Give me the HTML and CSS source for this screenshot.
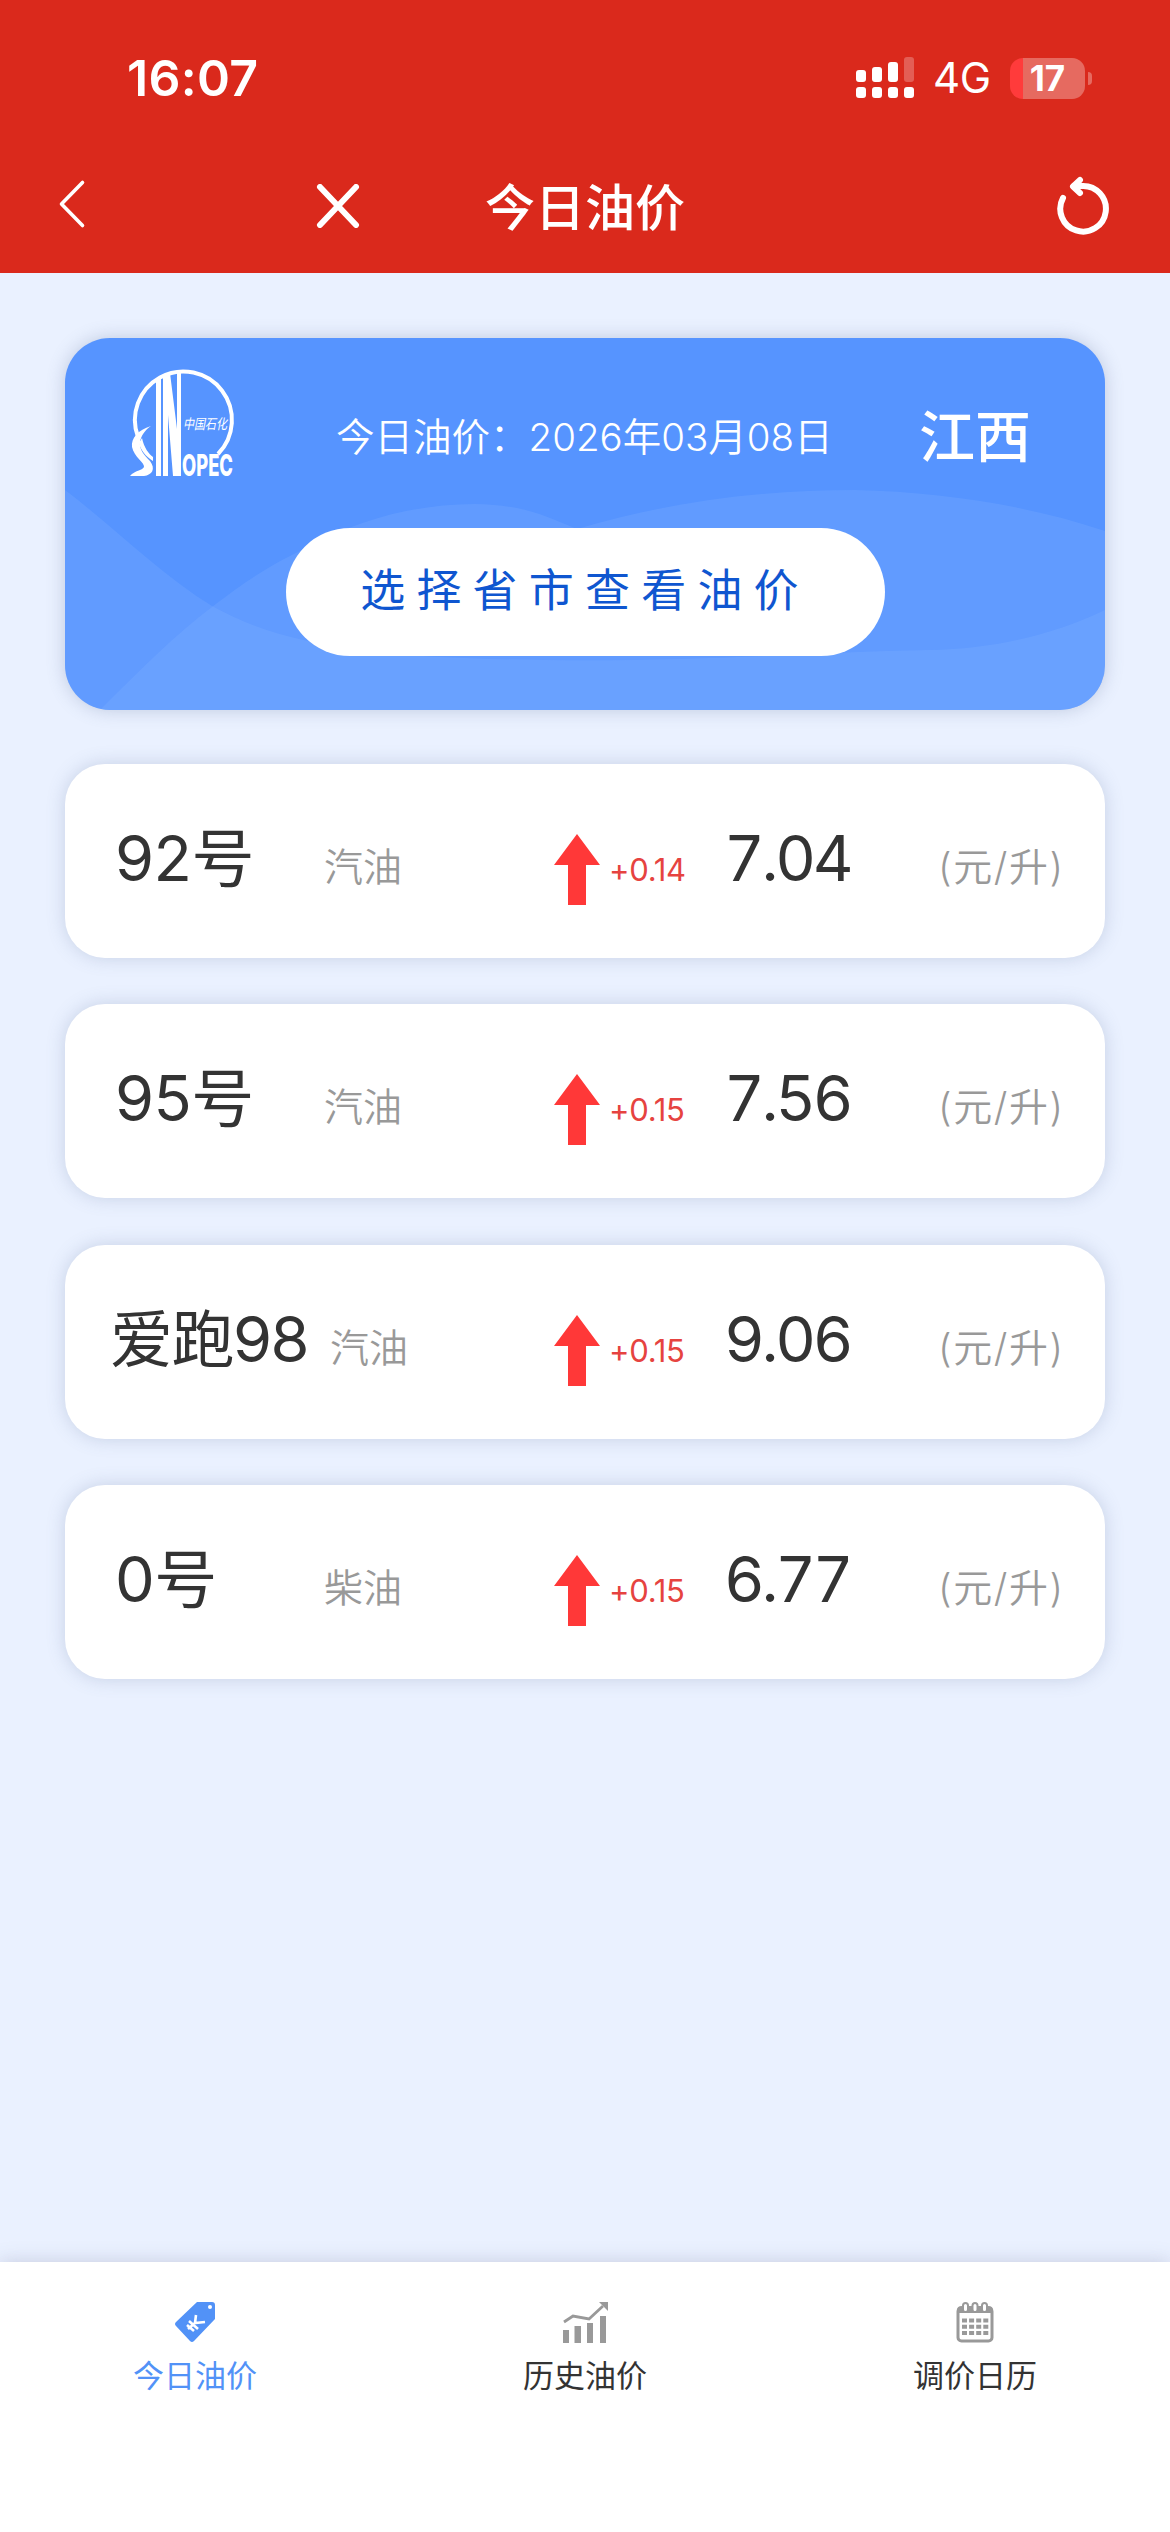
FILE: index.html
```html
<!DOCTYPE html>
<html lang="zh-CN">
<head>
    <meta charset="UTF-8">
    <meta name="viewport" content="width=device-width, initial-scale=1.0">
    <title>今日油价</title>
    <link rel="stylesheet" href="styles.css">
</head>
<body>
    <div class="header">
        <div class="status-bar">
            <div class="time">16:07</div>
            <svg class="signal" width="59" height="42" viewBox="0 0 59 42" fill="#fff">
                <rect x="0" y="13" width="10" height="12" rx="3"/>
                <rect x="16" y="10" width="10" height="15" rx="3"/>
                <rect x="32" y="5" width="10" height="20" rx="3"/>
                <rect x="48" y="0" width="10" height="25" rx="3" opacity="0.25"/>
                <rect x="0" y="30" width="10" height="11" rx="3"/>
                <rect x="16" y="30" width="10" height="11" rx="3"/>
                <rect x="32" y="30" width="10" height="11" rx="3"/>
                <rect x="48" y="30" width="10" height="11" rx="3"/>
            </svg>
            <div class="network">4G</div>
            <div class="battery"><span>17</span></div>
            <div class="battery-tip"></div>
        </div>
        <div class="nav-bar">
            <svg class="nav-back" width="30" height="50" viewBox="0 0 30 50" fill="none" stroke="#fff" stroke-width="3.6" stroke-linecap="round" stroke-linejoin="round">
                <path d="M25.5 3.500L4.500 25L25.5 46.500"/>
            </svg>
            <svg class="nav-close" width="44" height="44" viewBox="0 0 44 44" fill="none" stroke="#fff" stroke-width="6" stroke-linecap="round">
                <path d="M4 3L40 41M40 3L4 41"/>
            </svg>
            <div class="nav-title">今日油价</div>
            <svg class="nav-refresh" width="54" height="60" viewBox="0 0 54 60" fill="none" stroke="#fff" stroke-width="6" stroke-linecap="round" stroke-linejoin="round">
                <path d="M8 22A22.8 22.8 0 1 0 27 10H19"/>
                <path d="M25 4L18 10.500L25 17"/>
            </svg>
        </div>
    </div>

    <div class="content">
        <div class="banner">
            <svg class="banner-bg" width="1040" height="372" viewBox="0 0 1040 372" fill="#8ab4ff">
                <path fill-opacity="0.22" d="M0 152C50 190 95 236 147 268C225 312 330 320 480 322C640 324 740 314 865 312C930 311 990 296 1040 272V372H0Z"/>
                <path fill-opacity="0.22" d="M35 372C75 332 110 297 147 269C180 244 200 230 235 213C290 182 350 166 410 166C460 167 480 178 512 191C600 165 690 152 790 152C880 154 965 168 1040 193V372Z"/>
            </svg>
            <div class="banner-top">
                <svg class="logo" width="106" height="116" viewBox="0 0 106 116">
                    <path d="M8 68A48.500 48.500 0 1 1 88 85" fill="none" stroke="#fff" stroke-width="4"/>
                    <path d="M26 10L31 8V107H26ZM33 7L40 4L47 60V4L51 4V107H43L38 46V107H33Z" fill="#fff"/>
                    <path d="M21 57C8 61 1 69 2 78C4 88 15 94 14 98C12 102 5 101 0 107H14C22 106 26 100 20 92C14 86 9 80 10 73C11 67 15 61 21 57Z" fill="#fff"/>
                    <path d="M12 69C14 79 19 85 23 88V92C16 88 10 80 9 74Z" fill="#fff"/>
                    <text class="logo-name" x="52" y="106.500" textLength="51" lengthAdjust="spacingAndGlyphs">OPEC</text>
                    <text class="logo-cn" x="53" y="60" textLength="44" lengthAdjust="spacingAndGlyphs">中国石化</text>
                </svg>
                <div class="banner-date">今日油价：2026年03月08日</div>
                <div class="banner-city">江西</div>
            </div>
            <button class="select-btn">选择省市查看油价</button>
        </div>

        <div class="price-card">
            <div class="oil-name">92号</div>
            <div class="oil-type">汽油</div>
            <svg class="arrow" width="46" height="72" viewBox="0 0 46 72"><path d="M23 0L46 31H32V71H14V31H0Z" fill="#ff3838"/></svg>
            <div class="change">+0.14</div>
            <div class="price">7.04</div>
            <div class="unit">(元/升)</div>
        </div>
        <div class="price-card">
            <div class="oil-name">95号</div>
            <div class="oil-type">汽油</div>
            <svg class="arrow" width="46" height="72" viewBox="0 0 46 72"><path d="M23 0L46 31H32V71H14V31H0Z" fill="#ff3838"/></svg>
            <div class="change">+0.15</div>
            <div class="price">7.56</div>
            <div class="unit">(元/升)</div>
        </div>
        <div class="price-card long-name">
            <div class="oil-name">爱跑98</div>
            <div class="oil-type">汽油</div>
            <svg class="arrow" width="46" height="72" viewBox="0 0 46 72"><path d="M23 0L46 31H32V71H14V31H0Z" fill="#ff3838"/></svg>
            <div class="change">+0.15</div>
            <div class="price">9.06</div>
            <div class="unit">(元/升)</div>
        </div>
        <div class="price-card">
            <div class="oil-name">0号</div>
            <div class="oil-type">柴油</div>
            <svg class="arrow" width="46" height="72" viewBox="0 0 46 72"><path d="M23 0L46 31H32V71H14V31H0Z" fill="#ff3838"/></svg>
            <div class="change">+0.15</div>
            <div class="price">6.77</div>
            <div class="unit">(元/升)</div>
        </div>
    </div>

    <div class="tab-bar">
        <div class="tab active">
            <svg width="46" height="42" viewBox="0 0 46 42">
                <path d="M25 1H40Q43 1 43 4V18L22 40Q20 42 18 40L4 25Q2 23 4 21Z" fill="#5292f7"/>
                <circle cx="38" cy="6" r="2" fill="#fff"/>
                <path d="M24 14L23 22L33 21M23 22L16 28M17 20L26 28M15 24L22 30" stroke="#fff" stroke-width="2.600" fill="none"/>
            </svg>
            <div>今日油价</div>
        </div>
        <div class="tab">
            <svg width="46" height="42" viewBox="0 0 46 42">
                <path d="M1 29H7V42H1ZM12.500 25H19V42H12.500ZM25 22H31V42H25ZM38 15H44V42H38Z" fill="#999"/>
                <path d="M2 21L11 15L27 18L41 5" stroke="#999" stroke-width="2.800" fill="none"/>
                <path d="M37 1H46V10Z" fill="#999"/>
            </svg>
            <div>历史油价</div>
        </div>
        <div class="tab">
            <svg width="46" height="42" viewBox="0 0 46 42">
                <rect x="6" y="7" width="34" height="33" rx="3.500" fill="none" stroke="#999" stroke-width="3"/>
                <path d="M5 12V9Q5 5 10 5H36Q41 5 41 9V12Z" fill="#999"/>
                <g fill="#fff" stroke="#999" stroke-width="2">
                    <rect x="11" y="2" width="5" height="9" rx="2.500"/>
                    <rect x="20.500" y="2" width="5" height="9" rx="2.500"/>
                    <rect x="30" y="2" width="5" height="9" rx="2.500"/>
                </g>
                <path d="M10 19.500H37M10 25.800H37M10 32H37" stroke="#999" stroke-width="4" stroke-dasharray="5 2.100"/>
            </svg>
            <div>调价日历</div>
        </div>
    </div>
</body>
</html>
```
FILE: styles.css
```css
* {
    box-sizing: border-box;
}

body {
    margin: 0;
    width: 1170px;
    height: 2532px;
    display: flex;
    flex-direction: column;
    overflow: hidden;
    background: #eaf1ff;
    font-family: Inter, "Noto Sans CJK SC", sans-serif;
}

.header {
    height: 273px;
    background: #da291c;
    color: #fff;
}

.status-bar {
    display: flex;
    align-items: center;
    height: 156px;
    padding-left: 127px;
}

.time {
    width: 729px;
    font-size: 50px;
    font-weight: 600;
    line-height: 60px;
    letter-spacing: 0.3px;
}

.network {
    width: 77px;
    margin-left: 18px;
    font-size: 42px;
    line-height: 50px;
    letter-spacing: -0.5px;
}

.battery {
    width: 75px;
    height: 41px;
    border-radius: 13px;
    background: linear-gradient(to right, #ff3b3b 13px, #e66a60 13px);
    font-size: 35px;
    font-weight: 700;
    line-height: 41px;
    text-align: center;
}

.battery-tip {
    width: 4px;
    height: 13px;
    margin-left: 3px;
    border-radius: 0 6px 6px 0;
    background: #e66a60;
}

.nav-bar {
    display: flex;
    align-items: center;
    height: 100px;
    padding-left: 57px;
}

.nav-back {
    margin-right: 229px;
    margin-top: -4px;
}

.nav-title {
    width: 452px;
    margin-left: 125px;
    padding-top: 3px;
    font-size: 50px;
    font-weight: 500;
    line-height: 60px;
}

.nav-refresh {
    margin-left: 118px;
}

.content {
    flex: 1;
    padding: 65px 65px 0;
}

/* 顶部蓝色卡片 */
.banner {
    position: relative;
    height: 372px;
    margin-bottom: 54px;
    border-radius: 45px;
    background: #5694ff;
    box-shadow: 0 0 18px rgba(90, 110, 150, 0.3);
    color: #fff;
    overflow: hidden;
}

.banner-bg {
    position: absolute;
    left: 0;
    top: 0;
}

.banner-top {
    position: relative;
    display: flex;
    align-items: center;
    height: 190px;
    padding: 8px 0 0 65px;
}

.logo {
    margin-top: -20px;
    overflow: visible;
}

.logo-name {
    font-size: 30px;
    font-weight: 800;
    fill: #fff;
}

.logo-cn {
    font-size: 14px;
    font-style: italic;
    fill: #fff;
}

.banner-date {
    width: 583px;
    margin-left: 100px;
    font-size: 38.5px;
    font-weight: 350;
    line-height: 56px;
    white-space: nowrap;
}

.banner-city {
    font-size: 56px;
    font-weight: 500;
    line-height: 60px;
}

.select-btn {
    position: relative;
    display: block;
    width: 599px;
    height: 128px;
    margin: 0 auto;
    padding: 0 0 10px 0;
    border: none;
    border-radius: 64px;
    background: #fff;
    color: #0f56d0;
    font-family: inherit;
    font-size: 45px;
    letter-spacing: 11.2px;
}

.price-card {
    display: grid;
    grid-template-columns: 209px 230px 55px 115px 214px auto;
    align-items: baseline;
    height: 194px;
    margin-bottom: 46.4px;
    padding: 49px 0 0 50px;
    border-radius: 40px;
    background: #fff;
    box-shadow: 0 0 18px rgba(90, 110, 150, 0.25);
    white-space: nowrap;
}

.oil-name,
.price {
    font-size: 63px;
    font-weight: 380;
    line-height: 90px;
    letter-spacing: -0.5px;
    color: #333;
}

.price {
    font-variant-numeric: tabular-nums;
    letter-spacing: -3.3px;
}

.oil-type,
.unit {
    font-size: 39px;
    font-weight: 350;
    color: #999;
}

.unit {
    letter-spacing: 1.6px;
}

.arrow {
    align-self: start;
    margin-top: 21px;
}

.change {
    font-size: 31px;
    letter-spacing: -0.3px;
    color: #e64340;
}

.long-name .oil-name {
    margin-left: -5px;
    letter-spacing: -1.5px;
}

.long-name .oil-type {
    margin-left: 6px;
}

.tab-bar {
    display: flex;
    height: 270px;
    padding-top: 39px;
    background: #fff;
    box-shadow: 0 0 18px rgba(90, 90, 130, 0.25);
}

.tab {
    flex: 1;
    text-align: center;
    font-size: 31px;
    line-height: 44px;
    color: #333;
}

.tab svg {
    display: block;
    margin: 0 auto 11px;
}

.tab.active {
    color: #5292f7;
}
```
